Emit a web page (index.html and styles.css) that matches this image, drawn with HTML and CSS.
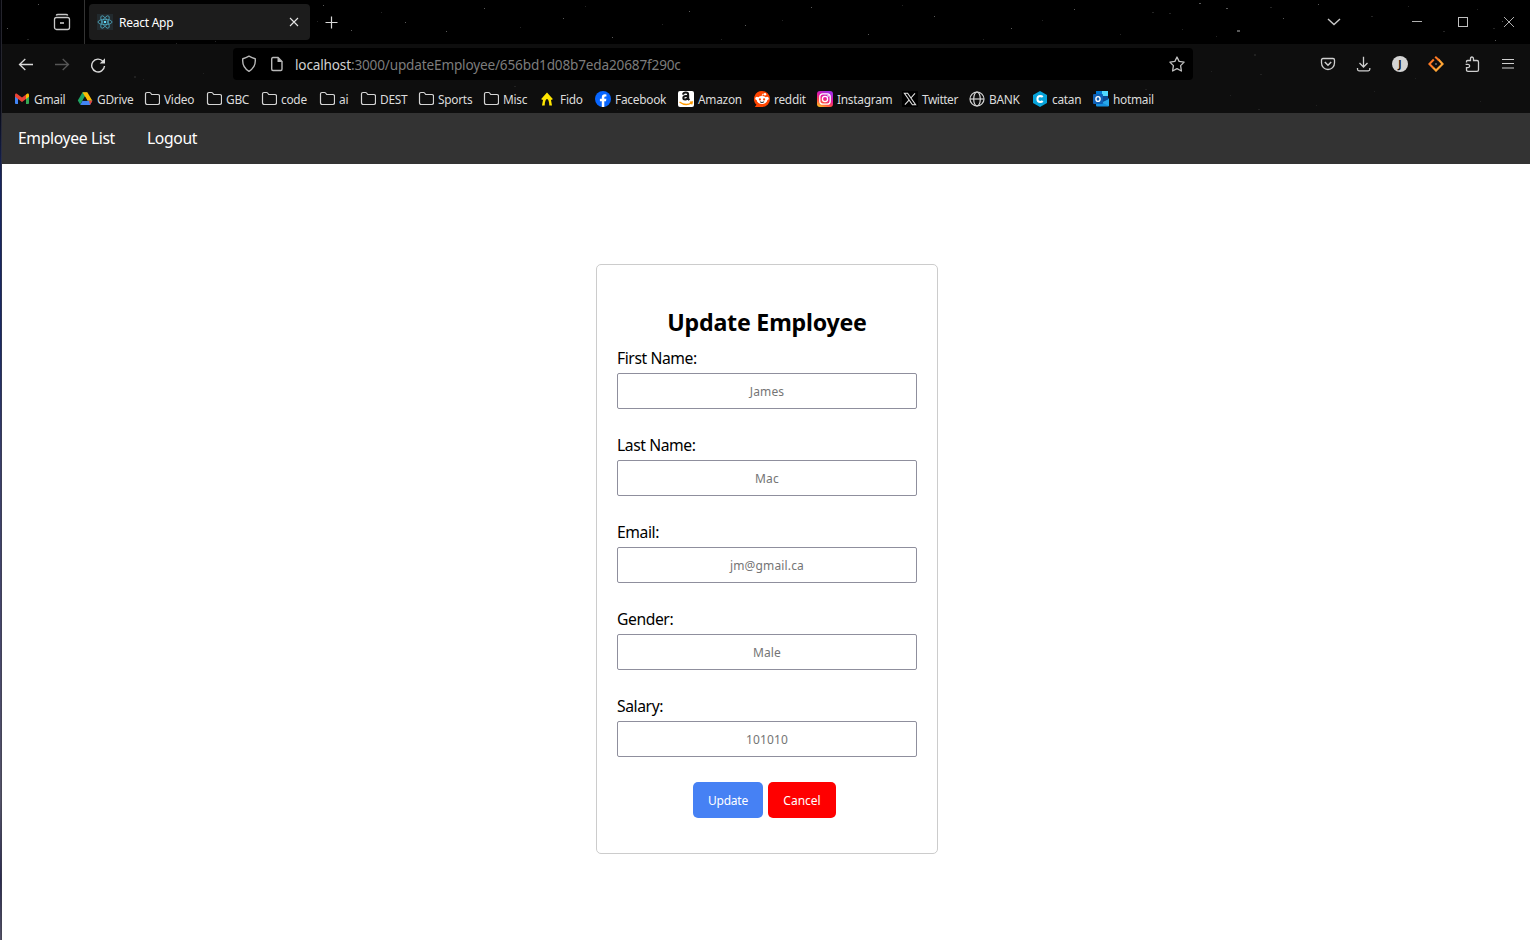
FILE: index.html
```html
<!DOCTYPE html>
<html lang="en">
<head>
<meta charset="utf-8">
<title>React App</title>
<link rel="stylesheet" href="styles.css">
</head>
<body>
<svg width="0" height="0" class="defs">
  <symbol id="folder" viewBox="0 0 16 16"><path d="M1.5 3.2Q1.5 1.5 3 1.5H5.6Q6.2 1.5 6.6 2L7.7 3.5H13.7Q15.5 3.5 15.5 5V11.8Q15.5 13.5 13.7 13.5H3.3Q1.5 13.5 1.5 11.8Z" fill="none" stroke="#d4d4d4" stroke-width="1.2"/></symbol>
</svg>
<div class="screen">
  <div class="desktop-edge"></div>
  <div class="window">
    <div class="chrome">
      <svg class="stars" width="1528" height="113" viewBox="2 0 1528 113" fill="#fff">
        <g opacity=".35"><rect x="38" y="4" width="1" height="1"/><rect x="7" y="28" width="1" height="1"/><rect x="351" y="30" width="1" height="1"/><rect x="323" y="5" width="1" height="1"/><rect x="405" y="22" width="1" height="1"/><rect x="446" y="31" width="1" height="1"/><rect x="484" y="8" width="1" height="1"/><rect x="563" y="18" width="1" height="1"/><rect x="612" y="37" width="1" height="1"/><rect x="689" y="11" width="1" height="1"/><rect x="745" y="25" width="1" height="1"/><rect x="811" y="7" width="1" height="1"/><rect x="868" y="34" width="1" height="1"/><rect x="934" y="16" width="1" height="1"/><rect x="1011" y="28" width="1" height="1"/><rect x="1074" y="9" width="1" height="1"/><rect x="1199" y="3" width="2" height="1"/><rect x="1226" y="8" width="2" height="1"/><rect x="1237" y="30" width="3" height="2"/><rect x="1318" y="4" width="1" height="1"/><rect x="1283" y="18" width="1" height="1"/><rect x="1495" y="40" width="1" height="1"/><rect x="1502" y="21" width="1" height="1"/></g>
        <g opacity=".14"><rect x="27" y="39" width="2" height="1"/><rect x="176" y="43" width="1" height="1"/><rect x="215" y="41" width="1" height="1"/><rect x="317" y="21" width="1" height="1"/><rect x="381" y="12" width="1" height="1"/><rect x="520" y="27" width="1" height="1"/><rect x="585" y="6" width="1" height="1"/><rect x="662" y="24" width="1" height="1"/><rect x="721" y="39" width="1" height="1"/><rect x="782" y="20" width="1" height="1"/><rect x="902" y="5" width="1" height="1"/><rect x="983" y="39" width="1" height="1"/><rect x="1042" y="20" width="1" height="1"/><rect x="1120" y="34" width="1" height="1"/><rect x="1152" y="12" width="2" height="1"/><rect x="1169" y="13" width="2" height="1"/><rect x="1182" y="29" width="1" height="1"/><rect x="1216" y="36" width="1" height="1"/><rect x="1270" y="7" width="2" height="1"/><rect x="1371" y="16" width="2" height="1"/><rect x="1408" y="6" width="1" height="1"/><rect x="1443" y="31" width="2" height="1"/><rect x="1477" y="9" width="1" height="1"/><rect x="1493" y="28" width="2" height="1"/></g>
        <g opacity=".08"><rect x="1254" y="54" width="2" height="2"/><rect x="1260" y="74" width="2" height="1"/><rect x="1211" y="71" width="1" height="1"/><rect x="1230" y="95" width="1" height="1"/><rect x="1258" y="109" width="2" height="1"/><rect x="1316" y="105" width="1" height="1"/><rect x="1145" y="89" width="2" height="1"/><rect x="1415" y="78" width="1" height="1"/><rect x="1374" y="91" width="1" height="1"/><rect x="1480" y="101" width="1" height="1"/><rect x="134" y="76" width="2" height="2"/><rect x="143" y="79" width="1" height="1"/><rect x="203" y="73" width="1" height="1"/><rect x="514" y="86" width="2" height="1"/><rect x="398" y="109" width="1" height="1"/><rect x="617" y="109" width="1" height="1"/><rect x="1040" y="105" width="1" height="1"/></g>
      </svg>
      <div class="titlebar">
        <div class="view-btn"><svg width="18" height="18" viewBox="0 0 18 18" fill="none" stroke="#c8c8c8" stroke-width="1.3"><path d="M3.2 2.4Q3.6 1.5 5 1.5H13Q14.4 1.5 14.8 2.4"/><rect x="1.5" y="4.5" width="15" height="12" rx="2"/><path d="M7 10H11" stroke-width="1.6"/></svg></div>
        <div class="tab">
          <svg class="favicon" width="16" height="16" viewBox="0 0 16 16"><rect width="16" height="16" fill="#222a2e"/><g fill="none" stroke="#4fa9c0" stroke-width=".8"><ellipse cx="8" cy="8" rx="7" ry="2.7"/><ellipse cx="8" cy="8" rx="7" ry="2.7" transform="rotate(60 8 8)"/><ellipse cx="8" cy="8" rx="7" ry="2.7" transform="rotate(120 8 8)"/></g><circle cx="8" cy="8" r="1.3" fill="#61dafb"/></svg>
          <span class="tab-title">React App</span>
          <svg width="10" height="10" viewBox="0 0 10 10" stroke="#e6e6e6" stroke-width="1.1"><path d="M1 1L9 9M9 1L1 9"/></svg>
        </div>
        <svg class="new-tab" width="13" height="13" viewBox="0 0 13 13" stroke="#d8d8d8" stroke-width="1.2"><path d="M6.5 .5V12.5M.5 6.5H12.5"/></svg>
        <svg class="all-tabs" width="14" height="8" viewBox="0 0 14 8" fill="none" stroke="#c8c8c8" stroke-width="1.4"><path d="M1 1L7 6.6L13 1"/></svg>
        <div class="win-controls">
          <svg width="12" height="12" viewBox="0 0 12 12" fill="none" stroke="#b0b0b0"><path d="M1 5.5H11"/></svg>
          <svg width="12" height="12" viewBox="0 0 12 12" fill="none" stroke="#c0c0c0"><rect x="1.5" y="1.5" width="9" height="9"/></svg>
          <svg width="12" height="12" viewBox="0 0 12 12" fill="none" stroke="#b0b0b0"><path d="M1 1L11 11M11 1L1 11"/></svg>
        </div>
      </div>
      <div class="toolbar">
        <svg class="back" width="16" height="14" viewBox="0 0 16 14" fill="none" stroke="#dadada" stroke-width="1.3"><path d="M7.3 1L1.5 6.5L7.3 12M1.5 6.5H15"/></svg>
        <svg class="forward" width="16" height="14" viewBox="0 0 16 14" fill="none" stroke="#565656" stroke-width="1.3"><path d="M8.7 1L14.5 6.5L8.7 12M14.5 6.5H1"/></svg>
        <svg class="reload" width="16" height="16" viewBox="0 0 16 16" fill="none" stroke="#dadada" stroke-width="1.4"><path d="M13 4.4A6.4 6.4 0 1 0 14.5 9"/><path d="M15 1.2V6.5H9.7Z" fill="#dadada" stroke="none"/></svg>
        <div class="urlbar">
          <svg width="16" height="18" viewBox="0 0 16 18" fill="none" stroke="#b8b8b8" stroke-width="1.4"><path d="M8 1.2Q11 3 14.2 3.8Q15.2 12 8 16.3Q.8 12 1.8 3.8Q5 3 8 1.2Z"/></svg>
          <svg class="page" width="14" height="16" viewBox="0 0 14 16" fill="none" stroke="#b8b8b8" stroke-width="1.4"><path d="M3 1.5H8L12 5.5V13Q12 14.5 10.8 14.5H3Q1.7 14.5 1.7 13V3Q1.7 1.5 3 1.5Z"/><path d="M7.5 1V6H12.5Z" fill="#b8b8b8" stroke="none"/></svg>
          <span class="url"><b>localhost</b>:3000/updateEmployee/656bd1d08b7eda20687f290c</span>
          <svg class="star" width="16" height="16" viewBox="0 0 16 16" fill="none" stroke="#c0c0c0" stroke-width="1.3" stroke-linejoin="round"><path d="M8 1L10.1 5.4L15.1 6.1L11.6 9.6L12.4 15L8 12.6L3.6 15L4.4 9.6L.9 6.1L5.9 5.4Z"/></svg>
        </div>
        <div class="actions">
          <svg width="16" height="16" viewBox="0 0 16 16" fill="none" stroke="#cfcfcf" stroke-width="1.3"><path d="M3 2.5H13Q14.5 2.5 14.5 4V7A6.5 6.5 0 0 1 1.5 7V4Q1.5 2.5 3 2.5Z"/><path d="M4.8 6L8 9.2L11.2 6" stroke-width="1.5"/></svg>
          <svg width="16" height="16" viewBox="0 0 16 16" fill="none" stroke="#cfcfcf" stroke-width="1.3"><path d="M7.5 .7V11M3.5 7L7.5 11L11.5 7M1.5 12V13.3Q1.5 14.8 3 14.8H12.3Q13.8 14.8 13.8 13.3V12"/></svg>
          <span class="avatar">J</span>
          <svg width="16" height="16" viewBox="0 0 16 16" fill="none" stroke-width="2.1"><path d="M10.2 3.2L14.6 8L8 14.6L5 11.6" stroke="#ffa535"/><path d="M5.2 11.8L1.4 8L5.8 3.6M7.2 .8L11 4.2" stroke="#ff7a24"/><circle cx="8" cy="8" r="1.1" fill="#666"/></svg>
          <svg width="16" height="16" viewBox="0 0 16 16" fill="none" stroke="#cfcfcf" stroke-width="1.3"><path d="M2.5 6.5V5.5Q2.5 4.5 3.5 4.5H6.5V3Q6.5 1 8 1Q9.5 1 9.5 3V4.5H13Q14.5 4.5 14.5 6V13.7Q14.5 15.3 13 15.3H4Q2.5 15.3 2.5 14V11.7H4Q5.7 11.5 5.7 10Q5.7 8.5 4 8.3H1.6"/></svg>
          <svg width="16" height="16" viewBox="0 0 16 16" stroke="#cfcfcf" stroke-width="1.2"><path d="M2 3.5H14M2 7.5H14M2 12H14"/></svg>
        </div>
      </div>
      <div class="bookmarks">
        <div class="bm w-gmail"><svg viewBox="0 0 16 16"><path d="M1 3.5L4 5.5V13H1.8Q1 13 1 12Z" fill="#4285f4"/><path d="M15 3.5L12 5.5V13H14.2Q15 13 15 12Z" fill="#34a853"/><path d="M12 3.5L13.4 2.6Q15 2.3 15 4V5.7L12 8Z" fill="#fbbc04"/><path d="M1 4Q1 2.3 2.6 2.6L8 6.5L12 3.5V8L8 11L1 5.8Z" fill="#ea4335"/></svg><span>Gmail</span></div>
        <div class="bm w-gdrive"><svg viewBox="0 0 16 16"><path d="M5.5 1.3H10.3L3.2 13.5L.8 9.5Z" fill="#1fa463"/><path d="M5.5 1.3H10.3L15.4 9.8H10.5Z" fill="#fbbc04"/><path d="M5.5 9.8H15.4L13 14H3.2Z" fill="#4285f4"/><path d="M12 9.8H15.4L13 14Z" fill="#ea4335"/><path d="M8 5.7L10.4 9.8H5.6Z" fill="#111"/></svg><span>GDrive</span></div>
        <div class="bm w-video"><svg><use href="#folder"/></svg><span>Video</span></div>
        <div class="bm w-gbc"><svg><use href="#folder"/></svg><span>GBC</span></div>
        <div class="bm w-code"><svg><use href="#folder"/></svg><span>code</span></div>
        <div class="bm w-ai"><svg><use href="#folder"/></svg><span>ai</span></div>
        <div class="bm w-dest"><svg><use href="#folder"/></svg><span>DEST</span></div>
        <div class="bm w-sports"><svg><use href="#folder"/></svg><span>Sports</span></div>
        <div class="bm w-misc"><svg><use href="#folder"/></svg><span>Misc</span></div>
        <div class="bm w-fido"><svg viewBox="0 0 16 16"><path d="M7 1.5L12.8 8L11.8 9L10.9 8.4L12 14.5H9.3Q9 8 7 8Q5 8 4.7 14.5H2L3.1 8.4L2.2 9L1.2 8Z" fill="#ffe600"/></svg><span>Fido</span></div>
        <div class="bm w-facebook"><svg viewBox="0 0 16 16"><circle cx="8" cy="8" r="8" fill="#0866ff"/><path d="M6.8 16V10.2H4.9V7.7H6.8V6.5Q6.8 3.3 9.8 3.3L11.4 3.5V5.6H10.4Q9.3 5.6 9.3 6.6V7.7H11.4L11 10.2H9.3V16Z" fill="#fff"/></svg><span>Facebook</span></div>
        <div class="bm w-amazon"><svg viewBox="0 0 16 16"><rect width="16" height="16" rx="2" fill="#fff"/><path d="M5 3.6Q5.4 1.6 7.8 1.6Q10.2 1.6 10.2 3.9V7.7L11.3 9.2M10 5H8Q5.3 5.1 5.3 7Q5.3 8.5 7.2 8.5Q9.6 8.3 10 6" fill="none" stroke="#111" stroke-width="2"/><path d="M1.5 11Q7.5 15.5 13.5 12M11.8 11.2L14.3 11L13.7 13.3" fill="none" stroke="#ff9900" stroke-width="1.3"/></svg><span>Amazon</span></div>
        <div class="bm w-reddit"><svg viewBox="0 0 16 16"><path d="M8 0A8 8 0 1 1 8 16H.8L2.5 13.8A8 8 0 0 1 8 0Z" fill="#ff4500"/><circle cx="2.9" cy="7.4" r="1.6" fill="#fff"/><circle cx="13.1" cy="7.4" r="1.6" fill="#fff"/><circle cx="11" cy="3.3" r="1.2" fill="#fff"/><path d="M8 5.4L8.6 3L10.5 3.3" fill="none" stroke="#fff" stroke-width=".7"/><ellipse cx="8" cy="9" rx="5.3" ry="4" fill="#fff"/><circle cx="5.9" cy="8.4" r="1.1" fill="#ff4500"/><circle cx="10.1" cy="8.4" r="1.1" fill="#ff4500"/><path d="M5.9 10.8Q8 12.3 10.1 10.8" fill="none" stroke="#222"/></svg><span>reddit</span></div>
        <div class="bm w-instagram"><svg viewBox="0 0 16 16"><defs><linearGradient id="ig" x1="0" y1="1" x2=".5" y2="0"><stop offset="0" stop-color="#ffd521"/><stop offset=".35" stop-color="#ff543e"/><stop offset=".65" stop-color="#e6169b"/><stop offset="1" stop-color="#a62ce0"/></linearGradient></defs><rect width="16" height="16" rx="3" fill="url(#ig)"/><g fill="none" stroke="#fff" stroke-width="1.3"><rect x="2.8" y="2.8" width="10.4" height="10.4" rx="3"/><circle cx="8" cy="8" r="2.6"/></g><circle cx="11.1" cy="4.9" r=".8" fill="#fff"/></svg><span>Instagram</span></div>
        <div class="bm w-twitter"><svg viewBox="0 0 16 16"><rect width="16" height="16" fill="#000"/><path d="M2.4 2.3H5.6L13.6 13.7H10.4ZM13 2.3L8.9 7M7 9.1L2.9 13.7" fill="none" stroke="#e0e0e0" stroke-width="1.1"/></svg><span>Twitter</span></div>
        <div class="bm w-bank"><svg viewBox="0 0 16 16" fill="none" stroke="#d4d4d4" stroke-width="1.2"><circle cx="8" cy="8" r="7"/><ellipse cx="8" cy="8" rx="3.3" ry="7"/><path d="M1.2 8H14.8"/></svg><span>BANK</span></div>
        <div class="bm w-catan"><svg viewBox="0 0 16 16"><path d="M8 0L15 4V12L8 16L1 12V4Z" fill="#06a3da"/><path d="M10.7 6Q9.8 4.9 8.3 4.9Q5.4 5 5.4 8Q5.4 11 8.3 11.1Q9.8 11.1 10.7 10" fill="none" stroke="#fff" stroke-width="2"/></svg><span>catan</span></div>
        <div class="bm w-hotmail"><svg viewBox="0 0 16 16"><path d="M3 0H15V9H3Z" fill="#28a8ea"/><path d="M9 0H15V5H9Z" fill="#50d9ff"/><path d="M3 0H9V5H3Z" fill="#0078d4"/><path d="M3 7L16 7.5V14.5Q16 15.5 15 15.5H4Q3 15.5 3 14.5Z" fill="#1490df"/><path d="M15 5V9L10 11V5Z" fill="#0a4a95"/><path d="M16 8V15L9 11.5Z" fill="#28a8ea"/><rect y="3" width="10" height="10" rx="1" fill="#0f5fb5"/><ellipse cx="5" cy="8" rx="2.1" ry="2.4" fill="none" stroke="#fff" stroke-width="1.4"/></svg><span>hotmail</span></div>
      </div>
    </div>
    <nav class="navbar"><a class="nav-list">Employee List</a><a class="nav-out">Logout</a></nav>
    <main class="content">
      <form class="card">
        <h2>Update Employee</h2>
        <label class="field"><span>First Name:</span><input type="text" placeholder="James"></label>
        <label class="field"><span>Last Name:</span><input type="text" placeholder="Mac"></label>
        <label class="field"><span>Email:</span><input type="text" placeholder="jm@gmail.ca"></label>
        <label class="field"><span>Gender:</span><input type="text" placeholder="Male"></label>
        <label class="field"><span>Salary:</span><input type="text" placeholder="101010"></label>
        <div class="buttons"><button type="button" class="update">Update</button><button type="button" class="cancel">Cancel</button></div>
      </form>
    </main>
  </div>
</div>
</body>
</html>
```
FILE: styles.css
```css
* { box-sizing: border-box; }
body { margin: 0; font-family: "Noto Sans", "Open Sans", sans-serif; background: #fff; overflow: hidden; }
svg { display: block; flex: none; }
.defs { position: absolute; }
.screen { display: flex; width: 1530px; height: 940px; }
.desktop-edge { width: 2px; background: linear-gradient(90deg, transparent 50%, rgba(60,60,70,.55) 50%), linear-gradient(#05050a 0, #080a16 110px, #18265f 180px, #1b2a63 340px, #3a3f6a 460px, #48486c 650px, #55546a 800px, #2b2b50 880px, #55546a 940px); }
.window { flex: 1; display: flex; flex-direction: column; }
.chrome { position: relative; height: 113px; background: #0e0e0e; color: #dcdcdc; }
.stars { position: absolute; left: 0; top: 0; }
.titlebar { height: 44px; background: #000; display: flex; align-items: center; }
.view-btn { width: 83px; height: 44px; border-right: 1px solid #333; padding: 13px 0 0 51px; }
.tab { position: relative; display: flex; align-items: center; width: 221px; height: 36px; margin-left: 4px; padding: 0 11px 0 8px; border-radius: 4px; background: #1c1c1c; }
.tab-title { flex: 1; margin-left: 6px; font-size: 12px; letter-spacing: -.25px; color: #fff; }
.new-tab { margin-left: 15px; }
.all-tabs { margin-left: 989px; }
.win-controls { display: flex; gap: 34px; margin-left: 70px; }
.toolbar { height: 40px; display: flex; align-items: center; }
.back { margin: 2px 0 0 16px; }
.forward { margin: 2px 0 0 20px; }
.reload { margin: 1px 0 0 20px; }
.urlbar { position: relative; display: flex; align-items: center; width: 960px; height: 32px; margin-left: 127px; padding: 0 8px; border-radius: 4px; background: #000; }
.page { margin-left: 13px; }
.url { flex: 1; margin-left: 11px; padding-top: 1px; font-size: 13.6px; letter-spacing: -.17px; color: #7c7c7c; white-space: nowrap; }
.url b { font-weight: 400; color: #d0d0d0; }
.actions { display: flex; gap: 20px; margin-left: 127px; }
.avatar { width: 16px; height: 16px; border-radius: 50%; background: #d3d3d3; color: #111; font: bold 10px/16px "Noto Sans", sans-serif; text-align: center; }
.bookmarks { display: flex; height: 29px; padding-left: 12px; align-items: center; }
.bm { display: flex; align-items: center; gap: 4px; font-size: 11.9px; letter-spacing: -.27px; white-space: nowrap; flex: none; }
.bm svg { width: 16px; height: 16px; }
.w-gmail { width: 63px; }
.w-gdrive { width: 67px; }
.w-video { width: 62px; }
.w-gbc { width: 55px; }
.w-code { width: 58px; }
.w-ai { width: 41px; }
.w-dest { width: 58px; }
.w-sports { width: 65px; }
.w-misc { width: 57px; }
.w-fido { width: 55px; }
.w-facebook { width: 83px; }
.w-amazon { width: 76px; }
.w-reddit { width: 63px; }
.w-instagram { width: 85px; }
.w-twitter { width: 67px; letter-spacing: -.45px; }
.w-bank { width: 63px; }
.w-catan { width: 61px; }
.navbar { display: flex; gap: 32px; height: 51px; padding-left: 16px; background: #333; color: #fff; font-size: 15.7px; letter-spacing: -.35px; line-height: 51px; white-space: nowrap; }
.nav-list { width: 97px; }
.content { flex: 1; padding: 100px 0 0 594px; }
.card { width: 342px; height: 590px; border: 1px solid #ccc; border-radius: 5px; padding: 40px 20px 0; }
h2 { margin: 0 -10px 9px; font-size: 23.2px; line-height: 34px; font-weight: 700; text-align: center; letter-spacing: -.22px; white-space: nowrap; }
.field { display: block; height: 87px; font-size: 15.7px; letter-spacing: -.42px; }
.field span { display: block; height: 25px; line-height: 21px; }
input { display: block; width: 300px; height: 36px; border: 1px solid #8f8f9d; border-radius: 2px; padding: 0; text-align: center; font: 12px "Noto Sans", sans-serif; letter-spacing: .15px; background: #fff; }
input::placeholder { color: #757575; }
.buttons { display: flex; gap: 5px; padding-left: 76px; margin-top: -1px; }
button { height: 36px; border: 0; border-radius: 5px; padding: 0; color: #fff; font: 12px "Noto Sans", sans-serif; }
.update { width: 70px; background: #4681f4; letter-spacing: -.2px; }
.cancel { width: 68px; background: #f00; }
```
